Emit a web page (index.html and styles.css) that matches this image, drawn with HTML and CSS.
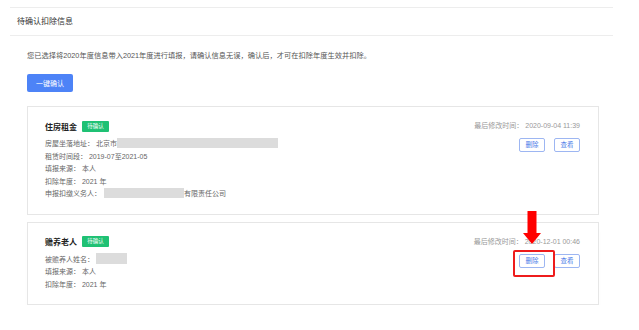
FILE: index.html
```html
<!DOCTYPE html>
<html lang="zh-CN">
<head>
<meta charset="utf-8">
<title>待确认扣除信息</title>
<link rel="stylesheet" href="styles.css">
</head>
<body>
<div class="panel">
  <div class="panel-head">待确认扣除信息</div>
  <div class="panel-body">
    <p class="desc">您已选择将2020年度信息带入2021年度进行填报，请确认信息无误，确认后，才可在扣除年度生效并扣除。</p>
    <button class="btn-primary">一键确认</button>

    <div class="card card-first">
      <div class="info">
        <div class="card-title">住房租金<span class="badge">待确认</span></div>
        <div class="row">房屋坐落地址： 北京市<span class="mask mask-addr"></span></div>
        <div class="row">租赁时间段： 2019-07至2021-05</div>
        <div class="row">填报来源： 本人</div>
        <div class="row">扣除年度： 2021 年</div>
        <div class="row">申报扣缴义务人：<span class="mask mask-org"></span>有限责任公司</div>
      </div>
      <div class="side">
        <div class="time">最后修改时间： 2020-09-04 11:39</div>
        <div class="actions">
          <button class="btn-small">删除</button>
          <button class="btn-small">查看</button>
        </div>
      </div>
    </div>

    <div class="card card-second">
      <div class="info">
        <div class="card-title">赡养老人<span class="badge">待确认</span></div>
        <div class="row">被赡养人姓名：<span class="mask mask-name"></span></div>
        <div class="row">填报来源： 本人</div>
        <div class="row">扣除年度： 2021 年</div>
      </div>
      <div class="side">
        <div class="time">最后修改时间： 2020-12-01 00:46</div>
        <div class="actions">
          <span class="highlight">
            <button class="btn-small">删除</button>
            <svg class="arrow" width="18" height="34" viewBox="0 0 18 34">
              <rect x="4.5" y="0" width="9" height="23" fill="#f00"/>
              <polygon points="0,22 18,22 9,33" fill="#f00"/>
            </svg>
          </span>
          <button class="btn-small">查看</button>
        </div>
      </div>
    </div>
  </div>
</div>
</body>
</html>
```

FILE: styles.css
```css
* { box-sizing: border-box; }
html, body { margin: 0; padding: 0; background: #fff; }
body {
  font-family: "Liberation Sans", "Noto Sans CJK SC", sans-serif;
  color: #666;
  padding-top: 7px;
}
.panel {
  margin-left: 10px;
  width: 603px;
  border-top: 1px solid #ededed;
}
.panel-head {
  height: 28px;
  line-height: 27px;
  padding-left: 7px;
  font-size: 8px;
  color: #333;
  border-bottom: 1px solid #ededed;
}
.panel-body {
  padding: 0 14px 0 17px;
}
.desc {
  margin: 14px 0 0;
  font-size: 7.25px;
  line-height: 12px;
  color: #555;
}
.btn-primary {
  display: block;
  margin-top: 12px;
  width: 46px;
  height: 18px;
  padding: 0;
  border: 0;
  border-radius: 2px;
  background: #4d83f7;
  color: #fff;
  font-family: inherit;
  font-size: 7px;
}
.card {
  display: flex;
  justify-content: space-between;
  width: 572px;
  border: 1px solid #e6e6e6;
  padding: 13px 18px 14px 17px;
}
.card-first { margin-top: 14px; }
.card-second {
  margin-top: 7px;
  box-shadow: 0 5px 6px -2px rgba(0,0,0,0.035);
}
.card-title {
  display: flex;
  align-items: center;
  height: 12px;
  font-size: 8px;
  font-weight: bold;
  color: #222;
  margin-bottom: 5px;
}
.badge {
  margin-left: 5px;
  width: 27px;
  height: 11px;
  line-height: 11px;
  text-align: center;
  background: #1fc174;
  color: #fff;
  font-size: 5.5px;
  font-weight: normal;
  border-radius: 1px;
}
.row {
  display: flex;
  align-items: center;
  height: 12.5px;
  font-size: 7px;
  white-space: pre;
}
.mask {
  display: inline-block;
  background: #dcdcdc;
}
.mask-addr { width: 161px; height: 10px; }
.mask-org { width: 80px; height: 10px; margin-left: 3px; }
.mask-name { width: 31px; height: 11px; margin-left: 2px; }
.side {
  display: flex;
  flex-direction: column;
  align-items: flex-end;
}
.time {
  height: 12px;
  line-height: 12px;
  font-size: 7px;
  color: #999;
  white-space: pre;
}
.actions {
  display: flex;
  align-items: flex-start;
  gap: 9px;
  margin-top: 6px;
}
.btn-small {
  display: block;
  width: 26px;
  height: 14px;
  padding: 0;
  border: 1px solid #9db6f2;
  border-radius: 2px;
  background: #fff;
  color: #4d7ce8;
  font-family: inherit;
  font-size: 6.5px;
  line-height: 12px;
}
.highlight {
  position: relative;
  display: block;
  height: 14px;
}
.highlight::after {
  content: "";
  position: absolute;
  left: -6px;
  top: -4px;
  width: 38px;
  height: 23px;
  border: 2px solid #ee1c1c;
  border-radius: 2px;
}
.arrow {
  position: absolute;
  left: 4px;
  top: -43px;
}
```
